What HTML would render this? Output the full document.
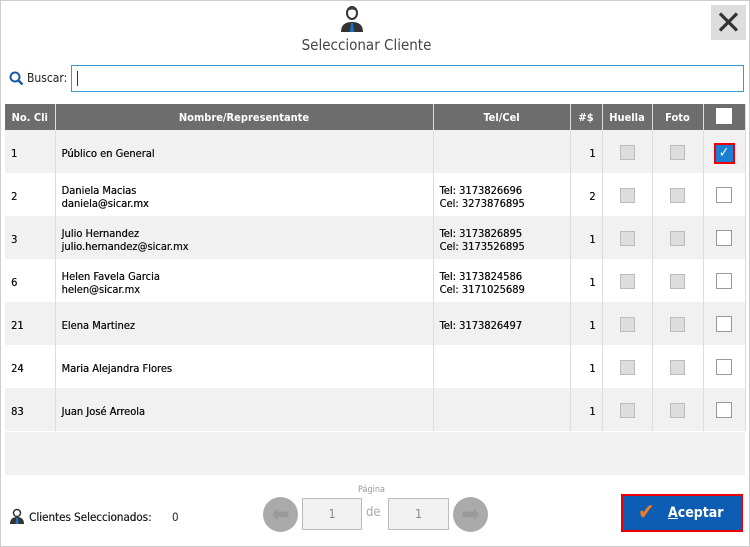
<!DOCTYPE html>
<html><head><meta charset="utf-8"><style>
*{margin:0;padding:0;box-sizing:border-box}
body{width:750px;height:547px;background:#fff;font-family:"DejaVu Sans Condensed","DejaVu Sans","Liberation Sans",sans-serif;font-size:11px;color:#222;position:relative;overflow:hidden}
.frame{position:absolute;left:0;top:0;width:750px;height:547px;border:1px solid #ccc;pointer-events:none}
.abs{position:absolute}
table{position:absolute;left:5px;top:104px;width:740px;border-collapse:collapse;table-layout:fixed}
th{background:#6d6d6d;color:#fff;height:26px;font-weight:bold;font-size:11px;border-right:1px solid #ddd}
td{height:43px;border-right:1px solid #ddd;padding:4px 6px 0;font-weight:normal;font-size:11px;line-height:13px;color:#111;text-shadow:0.3px 0 0 #111}
tr.o td{background:#f1f1f1}
.cb{display:inline-block;width:15px;height:15px;background:#ddd;border:1px solid #bbb}
.wb{display:inline-block;width:16px;height:16px;background:#fff;border:1px solid #999}
</style></head><body>
<svg class="abs" style="left:340px;top:5px" width="24" height="28" viewBox="0 0 24 28"><ellipse cx="12" cy="8" rx="5" ry="6" fill="#fff" stroke="#333" stroke-width="2"/><path d="M7 6q5-6 10 0q-5-3-10 0z" fill="#333"/><path d="M1 27q0-10 11-10q11 0 11 10z" fill="#333"/><path d="M11 18h2l1 9h-4z" fill="#1a6fc9"/></svg>
<div class="abs" style="left:0;width:733px;top:36px;text-align:center;font-size:15px;color:#444">Seleccionar Cliente</div>
<div class="abs" style="left:711px;top:5px;width:35px;height:35px;background:#ddd;font-size:33px;line-height:35px;text-align:center;color:#333;font-family:'DejaVu Sans',sans-serif">✕</div>
<svg class="abs" style="left:9px;top:71px" width="15" height="15" viewBox="0 0 15 15"><circle cx="6" cy="6" r="4.5" fill="none" stroke="#1a5aa8" stroke-width="2"/><path d="M9 9l4.5 4.5" stroke="#1a5aa8" stroke-width="2.5"/></svg>
<div class="abs" style="left:27px;top:71px;font-size:12px">Buscar:</div>
<div class="abs" style="left:71px;top:65px;width:673px;height:27px;border:1px solid #3a9ad9"><div style="margin:5px 0 0 5px;width:1px;height:15px;background:#333"></div></div>
<table>
<colgroup><col style="width:50px"><col style="width:378px"><col style="width:137px"><col style="width:32px"><col style="width:50px"><col style="width:51px"><col style="width:42px"></colgroup>
<tr><th>No. Cli</th><th>Nombre/Representante</th><th>Tel/Cel</th><th>#$</th><th>Huella</th><th>Foto</th><th><span class="wb" style="border:none"></span></th></tr>
<tr class="o"><td>1</td><td>Público en General</td><td></td><td style="text-align:right">1</td><td style="text-align:center"><span class="cb"></span></td><td style="text-align:center"><span class="cb"></span></td><td style="text-align:center"><span style="display:inline-block;width:21px;height:21px;border:2px solid #e00;background:#1a7fd4;color:#fff;font-size:14px;line-height:17px;text-align:center;text-shadow:none">✓</span></td></tr>
<tr><td>2</td><td>Daniela Macias<br>daniela@sicar.mx</td><td>Tel: 3173826696<br>Cel: 3273876895</td><td style="text-align:right">2</td><td style="text-align:center"><span class="cb"></span></td><td style="text-align:center"><span class="cb"></span></td><td style="text-align:center"><span class="wb"></span></td></tr>
<tr class="o"><td>3</td><td>Julio Hernandez<br>julio.hernandez@sicar.mx</td><td>Tel: 3173826895<br>Cel: 3173526895</td><td style="text-align:right">1</td><td style="text-align:center"><span class="cb"></span></td><td style="text-align:center"><span class="cb"></span></td><td style="text-align:center"><span class="wb"></span></td></tr>
<tr><td>6</td><td>Helen Favela Garcia<br>helen@sicar.mx</td><td>Tel: 3173824586<br>Cel: 3171025689</td><td style="text-align:right">1</td><td style="text-align:center"><span class="cb"></span></td><td style="text-align:center"><span class="cb"></span></td><td style="text-align:center"><span class="wb"></span></td></tr>
<tr class="o"><td>21</td><td>Elena Martinez</td><td>Tel: 3173826497</td><td style="text-align:right">1</td><td style="text-align:center"><span class="cb"></span></td><td style="text-align:center"><span class="cb"></span></td><td style="text-align:center"><span class="wb"></span></td></tr>
<tr><td>24</td><td>Maria Alejandra Flores</td><td></td><td style="text-align:right">1</td><td style="text-align:center"><span class="cb"></span></td><td style="text-align:center"><span class="cb"></span></td><td style="text-align:center"><span class="wb"></span></td></tr>
<tr class="o"><td>83</td><td>Juan José Arreola</td><td></td><td style="text-align:right">1</td><td style="text-align:center"><span class="cb"></span></td><td style="text-align:center"><span class="cb"></span></td><td style="text-align:center"><span class="wb"></span></td></tr>
</table>
<div class="abs" style="left:5px;top:432px;width:740px;height:43px;background:#f1f1f1"></div>
<svg class="abs" style="left:10px;top:508px" width="14" height="16" viewBox="0 0 14 16"><circle cx="7" cy="5" r="3.5" fill="#fff" stroke="#333" stroke-width="1.5"/><path d="M0 16q0-7 7-7q7 0 7 7z" fill="#333"/><path d="M6 10h2l.5 6h-3z" fill="#1a6fc9"/></svg>
<div class="abs" style="left:29px;top:510px;font-size:11.5px;text-shadow:0.3px 0 0 #222">Clientes Seleccionados:</div>
<div class="abs" style="left:172px;top:510px;font-size:11.5px">0</div>
<div class="abs" style="left:358px;top:485px;font-size:9px;color:#999">Página</div>
<div class="abs" style="left:263px;top:497px;width:35px;height:35px;border-radius:50%;background:#aaa;color:#999;font-size:24px;line-height:34px;text-align:center">⬅</div>
<div class="abs" style="left:302px;top:498px;width:60px;height:32px;border:1px solid #bbb;background:#f1f1f1;text-align:center;line-height:30px;font-size:12px;color:#888">1</div>
<div class="abs" style="left:366px;top:505px;font-size:13px;color:#aaa">de</div>
<div class="abs" style="left:388px;top:498px;width:61px;height:32px;border:1px solid #bbb;background:#f1f1f1;text-align:center;line-height:30px;font-size:12px;color:#888">1</div>
<div class="abs" style="left:453px;top:497px;width:35px;height:35px;border-radius:50%;background:#aaa;color:#999;font-size:24px;line-height:34px;text-align:center">➡</div>
<div class="abs" style="left:621px;top:494px;width:122px;height:38px;border:2px solid #e00;background:#0e5db4;color:#fff;font-size:14px;font-weight:bold;line-height:34px"><span style="color:#f37a1f;font-size:22px;position:absolute;left:15px;top:0">✔</span><span style="position:absolute;left:45px"><u>A</u>ceptar</span></div>
<div class="frame"></div>
</body></html>
